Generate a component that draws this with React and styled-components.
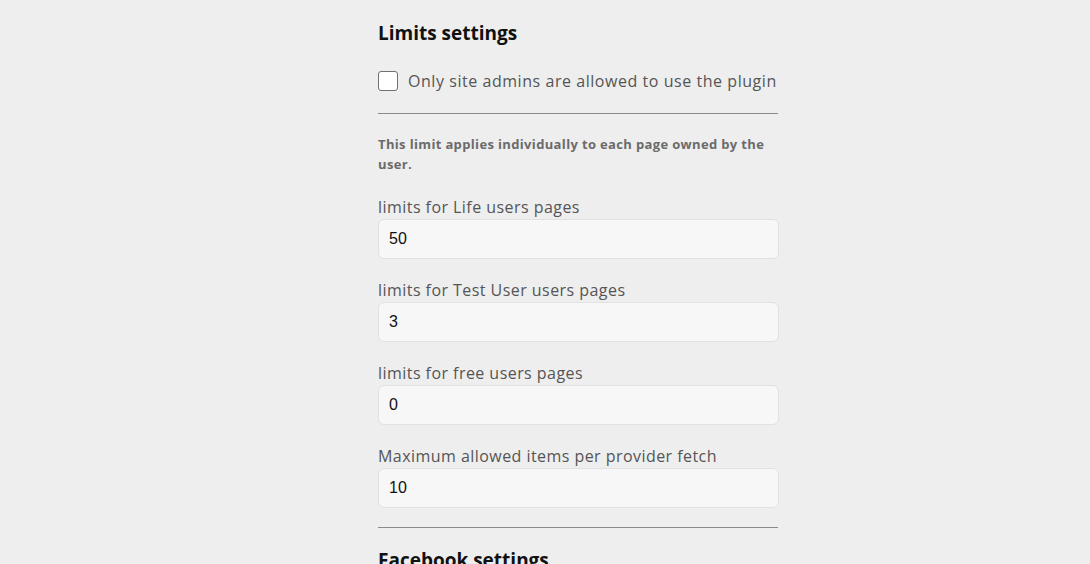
import React from "react";
import styled, { createGlobalStyle } from "styled-components";

const Global = createGlobalStyle`
  html, body { margin: 0; padding: 0; background: #eeeeee; }
  body { font-family: "Open Sans", "DejaVu Sans", sans-serif; overflow: hidden; }
  * { box-sizing: border-box; }
`;

const Page = styled.div`
  height: 564px;
  overflow: hidden;
  padding: 17px 0 0 378px;
`;

const Column = styled.div`
  width: 400px;
  display: flex;
  flex-direction: column;
`;

const Heading = styled.h2`
  margin: ${(p) => p.$top || 0}px 0 0;
  font-size: 19px;
  line-height: 32px;
  font-weight: 700;
  color: #111;
`;

const CheckRow = styled.label`
  display: flex;
  align-items: center;
  gap: 10px;
  margin-top: 20px;
  font-size: 16px;
  line-height: 24px;
  letter-spacing: 0.55px;
  color: #555;
`;

const Box = styled.span`
  width: 20px;
  height: 20px;
  border: 1.5px solid #707070;
  border-radius: 3px;
  background: #fff;
  flex: none;
`;

const Rule = styled.hr`
  margin: ${(p) => p.$top}px 0 0;
  border: 0;
  border-top: 1px solid #8a8a8a;
  width: 400px;
  height: 0;
`;

const Note = styled.p`
  margin: 20px 0 0;
  font-size: 13px;
  line-height: 20px;
  font-weight: 700;
  letter-spacing: 0.35px;
  color: #6b6b6b;
`;

const Field = styled.div`
  display: flex;
  flex-direction: column;
  margin-top: ${(p) => p.$top}px;
`;

const Label = styled.span`
  font-size: 16px;
  line-height: 24px;
  letter-spacing: 0.45px;
  color: #555;
`;

const Input = styled.input`
  width: 401px;
  height: 40px;
  border: 1px solid #e1e1e1;
  border-radius: 6px;
  background: #f7f7f7;
  padding: 0 10px;
  font-family: "Liberation Sans", Arial, sans-serif;
  font-size: 16px;
  color: #111;
  outline: none;
`;

const fields = [
  ["limits for Life users pages", "50"],
  ["limits for Test User users pages", "3"],
  ["limits for free users pages", "0"],
  ["Maximum allowed items per provider fetch", "10"],
];

export default function App() {
  return (
    <>
      <Global />
      <Page>
        <Column>
          <Heading>Limits settings</Heading>
          <CheckRow>
            <Box />
            Only site admins are allowed to use the plugin
          </CheckRow>
          <Rule $top={20} />
          <Note>This limit applies individually to each page owned by the user.</Note>
          {fields.map(([l, v], i) => (
            <Field key={l} $top={i === 0 ? 21 : 19}>
              <Label>{l}</Label>
              <Input defaultValue={v} />
            </Field>
          ))}
          <Rule $top={19} />
          <Heading $top={16}>Facebook settings</Heading>
        </Column>
      </Page>
    </>
  );
}
